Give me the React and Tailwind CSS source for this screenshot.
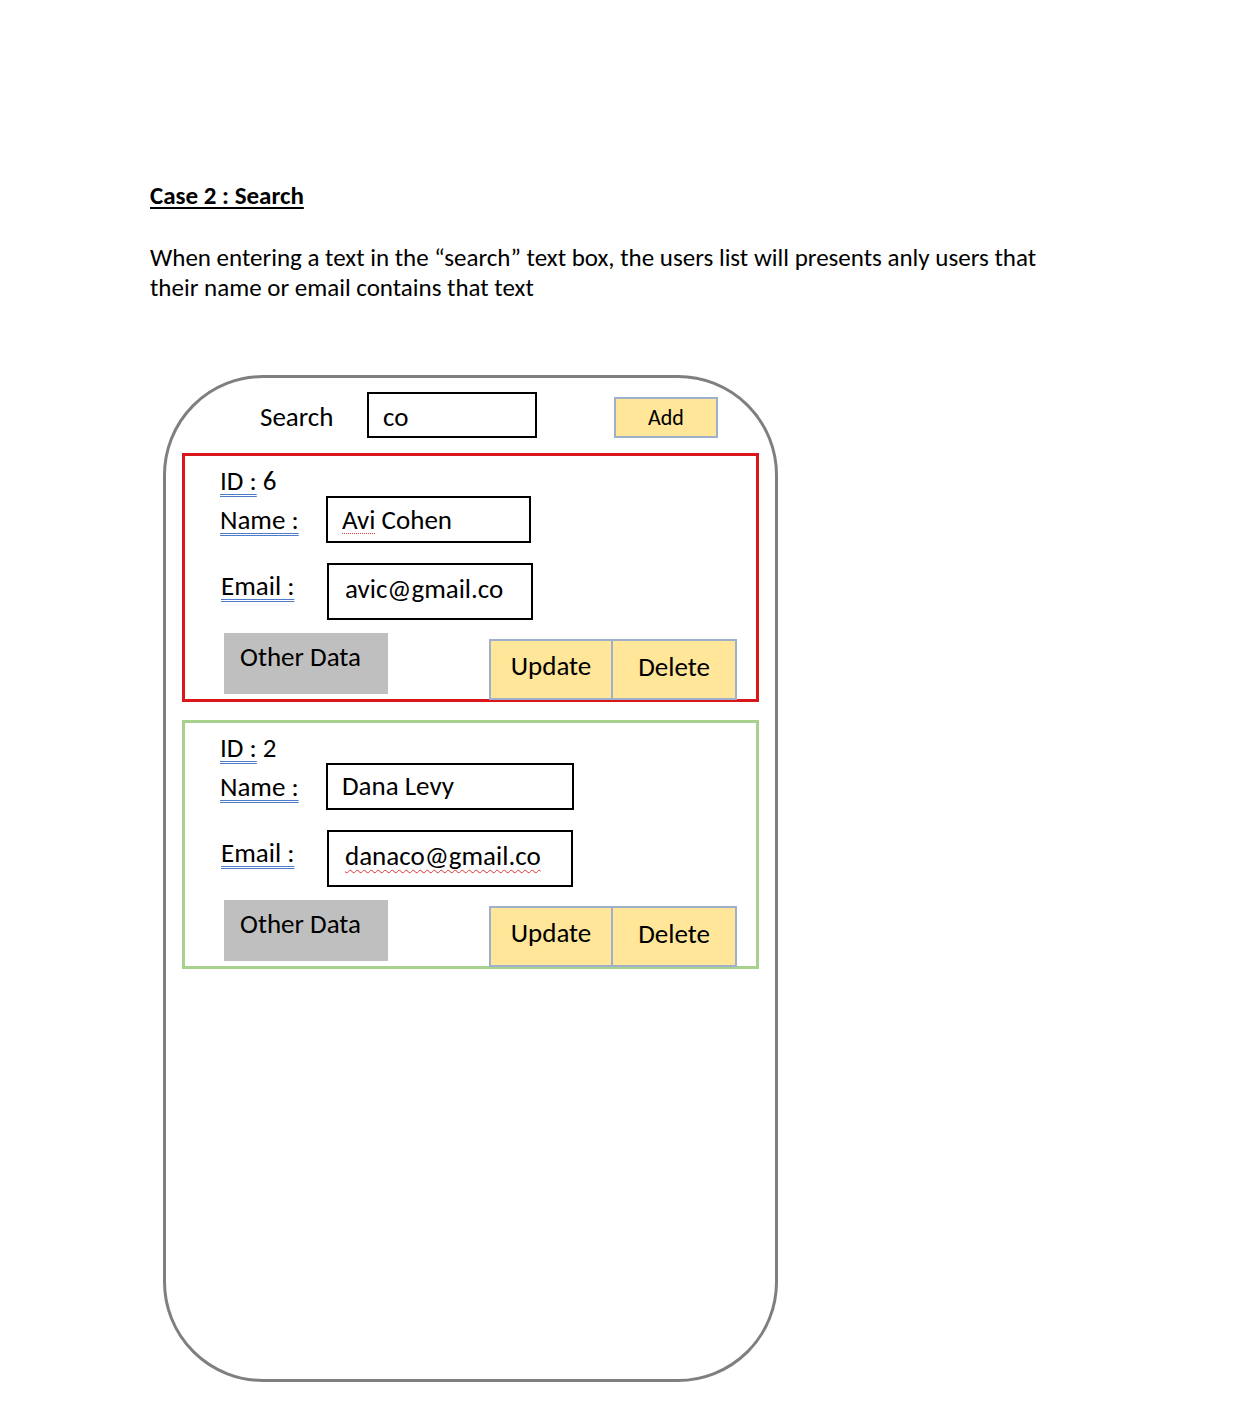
import React from 'react';

function Label({ children, className = '' }) {
  return (
    <span className={`underline decoration-double decoration-[#4f7bc8] decoration-1 underline-offset-[4px] ${className}`}>
      {children}
    </span>
  );
}

function UserCard({ id, border, nameWidth, emailWidth, nameDeco, emailDeco }) {
  return (
    <div className={`w-[577px] h-[249px] border-[3px] ${border} flex flex-col pl-[35px] pr-[19px] pt-[10px]`}>
      <div className="h-[30px] leading-[30px] text-[27px]">
        <Label>ID :</Label> {id}
      </div>
      <div className="flex items-center h-[47px]">
        <div className="w-[106px] text-[27px] mt-[2px]">
          <Label>Name :</Label>
        </div>
        <div className={`${nameWidth} h-[47px] border-2 border-black flex items-center pl-[14px] text-[27px]`}>
          {nameDeco}
        </div>
      </div>
      <div className="flex items-center h-[57px] mt-[20px]">
        <div className="w-[107px] pl-px text-[27px] -mt-[10px]">
          <Label>Email :</Label>
        </div>
        <div className={`${emailWidth} h-[57px] border-2 border-black flex items-center pl-[16px] text-[27px]`}>
          {emailDeco}
        </div>
      </div>
      <div className="flex mt-[13px]">
        <div className="ml-[4px] w-[164px] h-[61px] bg-[#bfbfbf] pl-[16px] pt-[7px] text-[27px] leading-[34px]">
          Other Data
        </div>
        <div className="ml-auto mt-[6px] flex">
          <button className="w-[124px] h-[61px] bg-[#ffe699] border-2 border-[#9fb0cc] text-[27px] leading-[34px] pb-[8px]">Update</button>
          <button className="w-[124px] h-[61px] bg-[#ffe699] border-2 border-l-0 border-[#9fb0cc] text-[27px] leading-[34px] pb-[6px]">Delete</button>
        </div>
      </div>
    </div>
  );
}

export default function App() {
  return (
    <div className="w-[1240px] h-[1420px] bg-white text-black pt-[181px] pl-[150px] font-[family-name:Carlito,Lato,sans-serif]">
      <h1 className="text-[25px] leading-[30px] font-bold underline underline-offset-[3px] decoration-2">Case 2 : Search</h1>
      <p className="mt-[32px] text-[25px] leading-[30px] whitespace-nowrap">
        When entering a text in the “search” text box, the users list will presents anly users that
        <br />
        their name or email contains that text
      </p>

      <div className="mt-[72px] ml-[13px] w-[615px] h-[1007px] border-[3px] border-[#7f7f7f] rounded-[100px] flex flex-col pl-[16px] pt-[14px]">
        <div className="flex items-center h-[46px] pl-[78px]">
          <div className="w-[107px] text-[27px] mt-[4px]">Search</div>
          <div className="w-[170px] h-[46px] border-2 border-black flex items-center pl-[14px] text-[27px]">
            <span className="mt-[4px]">co</span>
          </div>
          <button className="ml-[77px] mt-[4px] w-[104px] h-[41px] bg-[#ffe699] border-2 border-[#9fb0cc] text-[22px] leading-[28px] pt-[2px]">Add</button>
        </div>

        <div className="mt-[15px] flex flex-col gap-[18px]">
          <UserCard
            id="6"
            border="border-[#d9161c]"
            nameWidth="w-[205px]"
            emailWidth="w-[206px]"
            nameDeco={
              <span className="mt-[2px]">
                <span className="underline decoration-dotted decoration-[#e04040] decoration-1 underline-offset-[4px]">Avi</span> Cohen
              </span>
            }
            emailDeco={<span className="-mt-[4px]">avic@gmail.co</span>}
          />
          <UserCard
            id="2"
            border="border-[#a9d18e]"
            nameWidth="w-[248px]"
            emailWidth="w-[246px]"
            nameDeco={<span>Dana Levy</span>}
            emailDeco={
              <span className="-mt-[4px] underline decoration-wavy decoration-[#e03030] decoration-1 underline-offset-[4px]">danaco@gmail.co</span>
            }
          />
        </div>
      </div>
    </div>
  );
}
